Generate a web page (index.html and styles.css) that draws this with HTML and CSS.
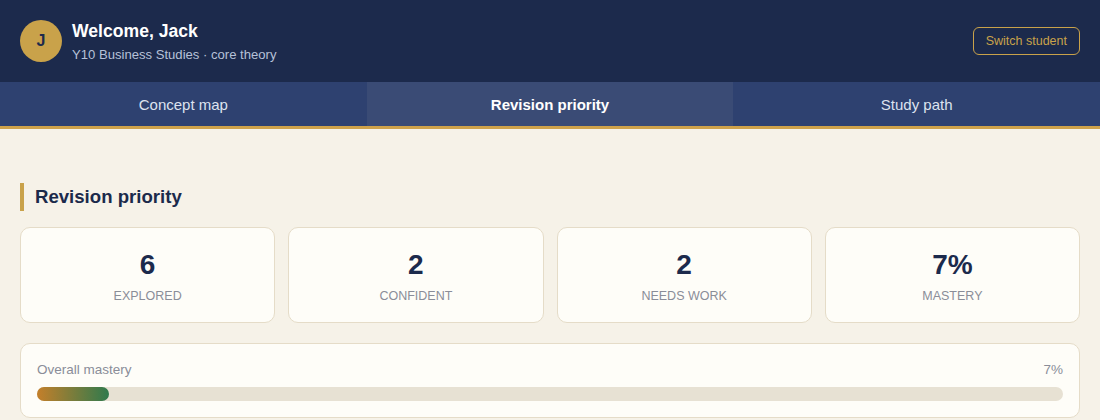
FILE: index.html
```html
<!DOCTYPE html>
<html lang="en">
<head>
    <meta charset="UTF-8">
    <meta name="viewport" content="width=device-width, initial-scale=1.0">
    <title>Revision priority</title>
    <link rel="stylesheet" href="styles.css">
</head>
<body>
    <header class="topbar">
        <div class="student">
            <div class="avatar">J</div>
            <div>
                <div class="welcome">Welcome, Jack</div>
                <div class="course">Y10 Business Studies · core theory</div>
            </div>
        </div>
        <button class="switch-btn">Switch student</button>
    </header>

    <nav class="tabs">
        <div class="tab">Concept map</div>
        <div class="tab active">Revision priority</div>
        <div class="tab">Study path</div>
    </nav>

    <main class="content">
        <h2 class="section-title">Revision priority</h2>

        <div class="stats">
            <div class="stat-card">
                <div class="stat-num">6</div>
                <div class="stat-label">Explored</div>
            </div>
            <div class="stat-card">
                <div class="stat-num">2</div>
                <div class="stat-label">Confident</div>
            </div>
            <div class="stat-card">
                <div class="stat-num">2</div>
                <div class="stat-label">Needs work</div>
            </div>
            <div class="stat-card">
                <div class="stat-num">7%</div>
                <div class="stat-label">Mastery</div>
            </div>
        </div>

        <div class="mastery-card">
            <div class="mastery-head">
                <span>Overall mastery</span>
                <span>7%</span>
            </div>
            <div class="bar">
                <div class="bar-fill" style="width: 7%"></div>
            </div>
        </div>
    </main>
</body>
</html>
```

FILE: styles.css
```css
body {
    margin: 0;
    font-family: "Liberation Sans", Arial, sans-serif;
    background: #f6f2e8;
    color: #1b2a4b;
}
.topbar {
    height: 82px;
    background: #1c2a4c;
    display: flex;
    align-items: center;
    justify-content: space-between;
    padding: 0 20px;
}
.student {
    display: flex;
    align-items: center;
    gap: 10px;
}
.avatar {
    width: 42px;
    height: 42px;
    border-radius: 50%;
    background: #c9a24a;
    color: #1c2a4c;
    font-weight: bold;
    font-size: 16px;
    display: flex;
    align-items: center;
    justify-content: center;
}
.welcome {
    color: #ffffff;
    font-size: 17.6px;
    font-weight: bold;
}
.course {
    color: #b6c1d8;
    font-size: 13.1px;
    margin-top: 5px;
}
.switch-btn {
    background: transparent;
    border: 1px solid #c9a24a;
    color: #c9a24a;
    border-radius: 6px;
    font-family: inherit;
    font-size: 12.5px;
    padding: 6px 12px;
    height: 28px;
}
.tabs {
    display: flex;
    background: #2e4170;
    border-bottom: 3px solid #cfa24a;
}
.tab {
    flex: 1;
    height: 44px;
    display: flex;
    align-items: center;
    justify-content: center;
    color: #dde3ef;
    font-size: 15px;
}
.tab.active {
    background: #3a4b75;
    color: #ffffff;
    font-weight: bold;
}
.content {
    padding: 54px 20px 0;
}
.section-title {
    margin: 0 0 16px;
    font-size: 18.6px;
    border-left: 4px solid #c9a24a;
    padding-left: 11px;
    line-height: 28px;
}
.stats {
    display: grid;
    grid-template-columns: repeat(4, 1fr);
    gap: 13px;
}
.stat-card {
    background: #fefdf8;
    border: 1px solid #e5dcc8;
    border-radius: 10px;
    height: 96px;
    padding-top: 2px;
    box-sizing: border-box;
    display: flex;
    flex-direction: column;
    align-items: center;
    justify-content: center;
}
.stat-num {
    font-size: 28px;
    font-weight: bold;
    color: #1c2a4c;
}
.stat-label {
    font-size: 12.5px;
    color: #8a8d98;
    text-transform: uppercase;
    margin-top: 8px;
}
.mastery-card {
    margin-top: 20px;
    background: #fefdf8;
    border: 1px solid #e5dcc8;
    border-radius: 10px;
    padding: 18px 16px 16px;
}
.mastery-head {
    display: flex;
    justify-content: space-between;
    font-size: 13.5px;
    color: #8a8d98;
}
.bar {
    margin-top: 10px;
    height: 14px;
    border-radius: 7px;
    background: #e7e1d3;
}
.bar-fill {
    height: 100%;
    border-radius: 7px;
    background: linear-gradient(to right, #c47f2a, #2f7a4d);
}
```
